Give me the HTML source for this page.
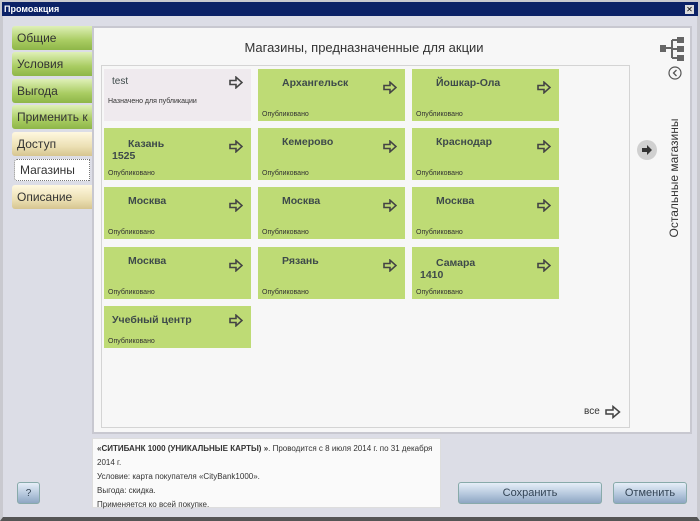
<!DOCTYPE html>
<html><head><meta charset="utf-8">
<style>
*{box-sizing:border-box;margin:0;padding:0}
body{width:700px;height:521px;overflow:hidden;background:#dcdde6;font-family:"Liberation Sans","DejaVu Sans",sans-serif;position:relative}
.win{position:absolute;left:0;top:0;width:700px;height:521px;border:3px solid #c9c9cf;border-bottom:4px solid #555}
.title{position:absolute;left:2px;top:2px;width:696px;height:14px;background:#0b2166;color:#fff;font-size:9px;font-weight:bold;line-height:14px;padding-left:2px}
.x{position:absolute;right:4px;top:3px;width:9px;height:9px;background:#ddd;color:#000;font-size:8px;line-height:9px;text-align:center}
.tab{position:absolute;left:12px;width:80px;height:24px;font-size:12px;color:#333;padding-left:5px;line-height:24px;border-radius:3px 0 0 3px}
.g{background:linear-gradient(#dff0b8,#a9cc62 60%,#8eb648);}
.y{background:linear-gradient(#fff8e0,#ece0b4 60%,#d6c590);}
.sel{background:#fff;border:1px dotted #777;left:14px;width:76px;height:22px;line-height:20px}
.main{position:absolute;left:92px;top:26px;width:600px;height:408px;background:#f7f7f7;border:2px solid #c8c8d0}
.h{position:absolute;left:0;width:540px;top:12px;text-align:center;font-size:13px;color:#333}
.inner{position:absolute;left:7px;top:37px;width:529px;height:363px;border:1px solid #d4d4d4}
.t{position:absolute;width:147px;background:#bedb75;font-size:10px;color:#333}
.t b{position:absolute;font-size:10.5px;font-weight:bold;color:#3e4a4a}
.t i{position:absolute;left:4px;bottom:3px;font-style:normal;font-size:7px;color:#333}
.t svg{position:absolute;right:8px;top:11px}
.desc{position:absolute;left:92px;top:438px;width:349px;height:70px;background:#fafafa;border:1px solid #ddd;font-size:8px;color:#333;padding:3px 4px;line-height:14px}
.btn{position:absolute;top:482px;height:22px;border-radius:3px;background:linear-gradient(#e6eef8,#b6c8dd 55%,#8ea6c2);border:1px solid #8aa;color:#345;font-size:11px;text-align:center;line-height:21px}
</style></head><body>
<div class="win"></div>
<div class="title">Промоакция<div class="x">✕</div></div>
<div class="tab g" style="top:26px">Общие</div>
<div class="tab g" style="top:52px">Условия</div>
<div class="tab g" style="top:79px">Выгода</div>
<div class="tab g" style="top:105px">Применить к</div>
<div class="tab y" style="top:132px">Доступ</div>
<div class="tab sel" style="top:159px">Магазины</div>
<div class="tab y" style="top:185px">Описание</div>
<div class="main">
<div class="h">Магазины, предназначенные для акции</div>
<div class="inner"></div>
<svg style="position:absolute;left:566px;top:9px" width="26" height="24"><rect x="0" y="8" width="6" height="7" fill="#666"/><rect x="17" y="0" width="7" height="6" fill="#666"/><rect x="17" y="9" width="7" height="6" fill="#666"/><rect x="17" y="18" width="7" height="6" fill="#666"/><path d="M6 11H12M12 3V21M12 3H17M12 12H17M12 21H17" stroke="#666" stroke-width="2" fill="none"/></svg>
<svg style="position:absolute;left:574px;top:38px" width="14" height="14"><circle cx="7" cy="7" r="6" fill="none" stroke="#555" stroke-width="1.2"/><path d="M8.5 4L5.5 7L8.5 10" stroke="#555" stroke-width="1.3" fill="none"/></svg>
<div style="position:absolute;left:580px;top:150px;transform:translate(-50%,-50%) rotate(-90deg);font-size:12px;color:#333;white-space:nowrap">Остальные магазины</div>
<svg style="position:absolute;left:542px;top:111px" width="22" height="22"><circle cx="11" cy="11" r="10" fill="#d0d0d0"/><path d="M6 9H11V6L16 11L11 16V13H6Z" fill="#333"/></svg>
<div style="position:absolute;left:490px;top:378px;font-size:10px;color:#333">все</div>
<svg style="position:absolute;left:511px;top:377px" width="16" height="14"><path d="M1 5H8V1.5L14.5 7L8 12.5V9H1Z" fill="none" stroke="#444" stroke-width="1.5"/></svg>
</div>
<div id="tiles"></div>
<div class="desc"><b>«СИТИБАНК 1000 (УНИКАЛЬНЫЕ КАРТЫ) »</b>. Проводится с 8 июля 2014 г. по 31 декабря 2014 г.<br>Условие: карта покупателя «CityBank1000».<br>Выгода: скидка.<br>Применяется ко всей покупке.</div>
<div class="btn" style="left:17px;width:23px;font-size:10px">?</div>
<div class="btn" style="left:458px;width:144px">Сохранить</div>
<div class="btn" style="left:613px;width:74px">Отменить</div>
<script>
var A='<svg width="14" height="13"><path d="M1 4.5H7V1.2L13 6.5L7 11.8V8.5H1Z" fill="none" stroke="#444" stroke-width="1.6"/></svg>';
var d=[[104,69,'test','',0],[258,69,'Архангельск','',1],[412,69,'Йошкар-Ола','',1],
[104,128,'Казань','1525',1],[258,128,'Кемерово','',1],[412,128,'Краснодар','',1],
[104,187,'Москва','',1],[258,187,'Москва','',1],[412,187,'Москва','',1],
[104,247,'Москва','',1],[258,247,'Рязань','',1],[412,247,'Самара','1410',1],
[104,306,'Учебный центр','',1]];
var h='';
d.forEach(function(t,i){
var ht=i==12?42:52;
if(t[4]==0){h+='<div class="t" style="left:'+t[0]+'px;top:'+t[1]+'px;height:'+ht+'px;background:#efeaee"><b style="left:8px;top:7px;font-weight:normal;font-size:10px">test</b><svg width="14" height="13" style="top:7px">'+A.slice(A.indexOf('>')+1)+'<div style="position:absolute;left:4px;top:29px;font-size:7px">Назначено для публикации</div></div>';}
else{var l=(i==12)?8:24;var top=(i==12)?8:(t[3]?10:8);
h+='<div class="t" style="left:'+t[0]+'px;top:'+t[1]+'px;height:'+ht+'px"><b style="left:'+l+'px;top:'+top+'px">'+t[2]+'</b>'+(t[3]?'<b style="left:8px;top:22px">'+t[3]+'</b>':'')+A.replace('<svg','<svg style="top:'+(i==12?8:12)+'px"')+'<i>Опубликовано</i></div>';}
});
document.getElementById('tiles').innerHTML=h;
</script>
</body></html>
